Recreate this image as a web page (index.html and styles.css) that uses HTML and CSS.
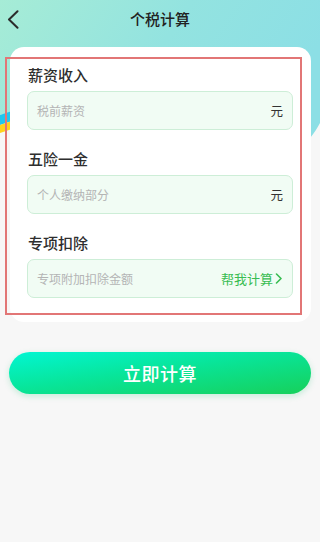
FILE: index.html
```html
<!DOCTYPE html>
<html lang="zh-CN">
<head>
<meta charset="utf-8">
<meta name="viewport" content="width=device-width, initial-scale=1">
<title>个税计算</title>
<link rel="stylesheet" href="styles.css">
</head>
<body>
<div class="page">
  <div class="hero-bg">
    <svg width="320" height="160" viewBox="0 0 320 160" xmlns="http://www.w3.org/2000/svg">
      <defs>
        <linearGradient id="teal" x1="0" y1="0" x2="1" y2="0.3">
          <stop offset="0" stop-color="#a6ecd6"/>
          <stop offset="0.55" stop-color="#93e3e0"/>
          <stop offset="1" stop-color="#8cdfe5"/>
        </linearGradient>
      </defs>
      <path d="M0 0 H320 V123 C314 134 308 142 300 146 L40 140 L12 112 L0 115 Z" fill="url(#teal)"/>
      <polygon points="0,115 12,111 12,121 0,125" fill="#1fc6ee"/>
      <polygon points="0,125 12,121 12,129 0,133" fill="#ffd31c"/>
    </svg>
  </div>

  <header class="topbar">
    <div class="back">
      <svg width="12" height="19" viewBox="0 0 12 19" xmlns="http://www.w3.org/2000/svg">
        <path d="M10.5 1.2 L2 9.5 L10.5 17.8" fill="none" stroke="#2b2b2b" stroke-width="2" stroke-linecap="round" stroke-linejoin="round"/>
      </svg>
    </div>
    <h1 class="title">个税计算</h1>
    <div class="spacer"></div>
  </header>

  <section class="card">
    <div class="form">
      <div class="field">
        <div class="label">薪资收入</div>
        <div class="input">
          <span class="placeholder">税前薪资</span>
          <span class="unit">元</span>
        </div>
      </div>
      <div class="field">
        <div class="label">五险一金</div>
        <div class="input">
          <span class="placeholder">个人缴纳部分</span>
          <span class="unit">元</span>
        </div>
      </div>
      <div class="field">
        <div class="label">专项扣除</div>
        <div class="input">
          <span class="placeholder">专项附加扣除金额</span>
          <span class="helper">帮我计算
            <svg width="8" height="11" viewBox="0 0 8 11" xmlns="http://www.w3.org/2000/svg">
              <path d="M1.5 1 L6 5.5 L1.5 10" fill="none" stroke="#39bd52" stroke-width="1.6" stroke-linecap="round" stroke-linejoin="round"/>
            </svg>
          </span>
        </div>
      </div>
    </div>
  </section>

  <button class="submit">立即计算</button>
</div>
</body>
</html>
```

FILE: styles.css
```css
* {
  box-sizing: border-box;
}

html, body {
  margin: 0;
  padding: 0;
}

body {
  background: #f7f7f7;
  font-family: "Noto Sans CJK SC", "Noto Sans", sans-serif;
  color: #333;
  width: 320px;
  min-height: 542px;
}

.page {
  position: relative;
  width: 320px;
  min-height: 542px;
  overflow: hidden;
}

.hero-bg {
  position: absolute;
  top: 0;
  left: 0;
  width: 320px;
  height: 160px;
  z-index: 0;
}

.hero-bg svg {
  display: block;
}

.topbar {
  position: relative;
  z-index: 1;
  height: 38px;
  display: grid;
  grid-template-columns: 40px 1fr 40px;
  align-items: center;
}

.back {
  padding-left: 7px;
  padding-top: 1px;
  display: flex;
  align-items: center;
}

.back svg {
  display: block;
}

.title {
  margin: 0;
  text-align: center;
  font-size: 15px;
  font-weight: 500;
  color: #222;
  line-height: 20px;
}

.card {
  position: relative;
  z-index: 1;
  margin: 9px 9px 0 10px;
  background: #fff;
  border-radius: 14px;
  padding: 10px 0 7px 0;
}

.form {
  margin: 0 9px 0 -5px;
  border: 2px solid #e27676;
  padding: 6px 7px 15px 20px;
  display: flex;
  flex-direction: column;
  gap: 19px;
}

.field {
  display: flex;
  flex-direction: column;
  gap: 6px;
}

.label {
  font-size: 15px;
  line-height: 20px;
  font-weight: 500;
  color: #2e2e2e;
  padding-left: 1px;
}

.input {
  height: 39px;
  border: 1px solid #cdeed7;
  background: #f1fcf4;
  border-radius: 7px;
  padding: 0 9px 0 9px;
  display: flex;
  align-items: center;
  justify-content: space-between;
}

.placeholder {
  font-size: 12px;
  color: #b4b4b4;
}

.unit {
  font-size: 12.5px;
  color: #333;
}

.helper {
  font-size: 13px;
  color: #39bd52;
  display: flex;
  align-items: center;
  gap: 2px;
}

.helper svg {
  display: block;
}

.submit {
  position: relative;
  z-index: 1;
  display: block;
  margin: 30px 9px 0 9px;
  width: 302px;
  height: 42px;
  border: none;
  border-radius: 21px;
  background: linear-gradient(172deg, #02f6d3 0%, #08e59a 45%, #17d05a 100%);
  box-shadow: 0 2px 6px rgba(20, 190, 110, 0.22);
  color: #fff;
  font-family: "Noto Sans CJK SC", "Noto Sans", sans-serif;
  font-size: 18px;
  font-weight: 500;
  letter-spacing: 0.5px;
  padding: 0;
}
```
